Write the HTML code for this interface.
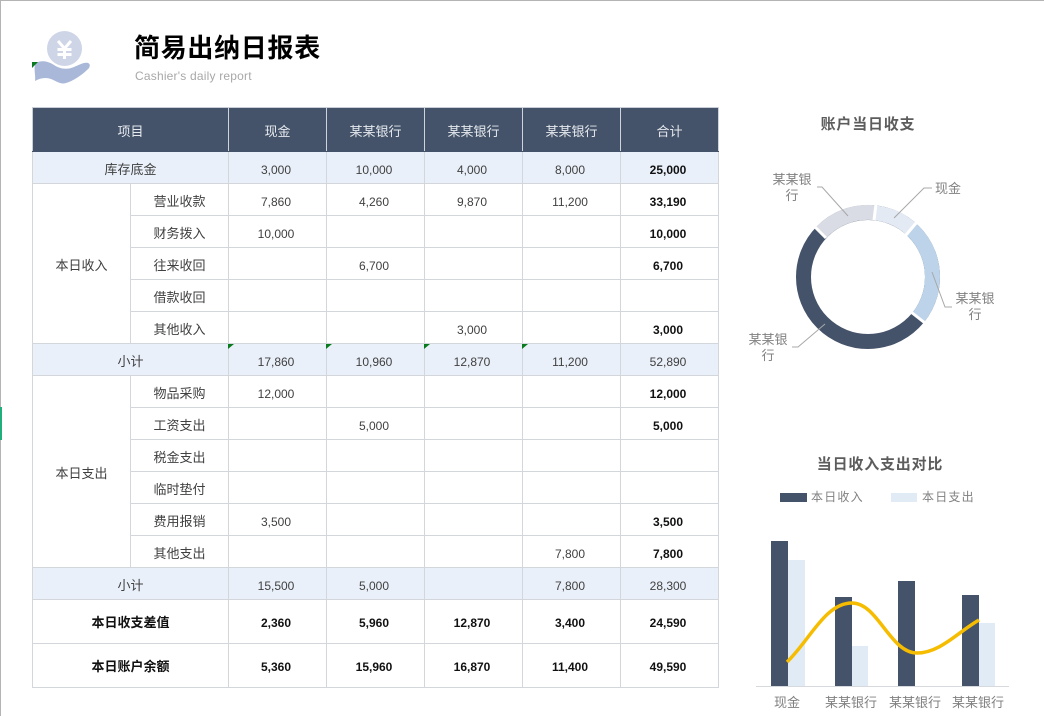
<!DOCTYPE html>
<html><head><meta charset="utf-8">
<style>
html,body{margin:0;padding:0;background:#fff}
body{width:1044px;height:716px;position:relative;overflow:hidden;font-family:"Liberation Sans","Noto Sans CJK SC",sans-serif;color:#404040}
.abs{position:absolute}
table{position:absolute;left:32px;top:107px;border-collapse:collapse;table-layout:fixed;width:686px}
td{border:1px solid #d3d6db;padding:5px 3px 0 0;margin:0;text-align:center;font-size:12px;box-sizing:border-box;height:32px;line-height:14px;overflow:hidden}
td.c{font-size:13px;padding-right:0}
tr.h td{background:#445369;color:#e6e9ee;height:44px;border-color:#445369;border-right-color:#cfd4dc;font-size:13px;padding-right:0}
tr.h td:first-child{border-left-color:#c9ced6}
tr.h td{border-top-color:#c9ced6}
tr.s td{background:#e9f0f9}
td.b{font-weight:bold;color:#111}
tr.t td{height:44px;font-weight:bold;color:#111;padding-top:3px}
tr.t td.c{font-size:13px}
.tri{position:absolute;width:0;height:0;border-top:5px solid #0a7a1e;border-right:6px solid transparent}
</style></head><body>
<div class="abs" style="left:0;top:0;width:1044px;height:1px;background:#b4b4b4"></div>
<div class="abs" style="left:0;top:0;width:1px;height:716px;background:#b4b4b4"></div>
<div class="abs" style="left:0;top:407px;width:2px;height:33px;background:#1fae7c"></div>

<svg class="abs" style="left:30px;top:30px" width="64" height="56" viewBox="30 30 64 56">
<circle cx="64.5" cy="48.5" r="17.500" fill="#ced5e7"/>
<path d="M58 41L64.500 48.500L71 41M64.500 48.500V59M57.500 49.500H71.500M57.500 54.500H71.500" fill="none" stroke="#fff" stroke-width="3"/>
<path d="M35 81C36 76 33 67 36 63C41 60 48 61 54 65C60 69 67 70 74 67C79 65 84 62 88 63C91 64 90 68 87 70C82 75 73 81 66 83C61 85 56 81 51 79C46 77 40 78 35 81Z" fill="#a9b8d9"/>
<path d="M32 62H38L32 68Z" fill="#0a7a1e"/>
</svg>

<div class="abs" style="left:134px;top:30px;font-size:26px;font-weight:bold;letter-spacing:.7px;line-height:36px;color:#000;white-space:nowrap">简易出纳日报表</div>
<div class="abs" style="left:135px;top:69px;font-size:12px;letter-spacing:.2px;line-height:15px;color:#a8a8a8;white-space:nowrap">Cashier's daily report</div>

<table>
<colgroup><col style="width:98px"><col style="width:98px"><col style="width:98px"><col style="width:98px"><col style="width:98px"><col style="width:98px"><col style="width:98px"></colgroup>
<tr class="h"><td colspan="2">项目</td><td>现金</td><td>某某银行</td><td>某某银行</td><td>某某银行</td><td>合计</td></tr>
<tr class="s"><td colspan="2" class="c">库存底金</td><td>3,000</td><td>10,000</td><td>4,000</td><td>8,000</td><td class="b">25,000</td></tr>
<tr><td rowspan="5" class="c">本日收入</td><td class="c">营业收款</td><td>7,860</td><td>4,260</td><td>9,870</td><td>11,200</td><td class="b">33,190</td></tr>
<tr><td class="c">财务拨入</td><td>10,000</td><td></td><td></td><td></td><td class="b">10,000</td></tr>
<tr><td class="c">往来收回</td><td></td><td>6,700</td><td></td><td></td><td class="b">6,700</td></tr>
<tr><td class="c">借款收回</td><td></td><td></td><td></td><td></td><td></td></tr>
<tr><td class="c">其他收入</td><td></td><td></td><td>3,000</td><td></td><td class="b">3,000</td></tr>
<tr class="s"><td colspan="2" class="c">小计</td><td>17,860</td><td>10,960</td><td>12,870</td><td>11,200</td><td>52,890</td></tr>
<tr><td rowspan="6" class="c">本日支出</td><td class="c">物品采购</td><td>12,000</td><td></td><td></td><td></td><td class="b">12,000</td></tr>
<tr><td class="c">工资支出</td><td></td><td>5,000</td><td></td><td></td><td class="b">5,000</td></tr>
<tr><td class="c">税金支出</td><td></td><td></td><td></td><td></td><td></td></tr>
<tr><td class="c">临时垫付</td><td></td><td></td><td></td><td></td><td></td></tr>
<tr><td class="c">费用报销</td><td>3,500</td><td></td><td></td><td></td><td class="b">3,500</td></tr>
<tr><td class="c">其他支出</td><td></td><td></td><td></td><td>7,800</td><td class="b">7,800</td></tr>
<tr class="s"><td colspan="2" class="c">小计</td><td>15,500</td><td>5,000</td><td></td><td>7,800</td><td>28,300</td></tr>
<tr class="t"><td colspan="2" class="c">本日收支差值</td><td>2,360</td><td>5,960</td><td>12,870</td><td>3,400</td><td>24,590</td></tr>
<tr class="t"><td colspan="2" class="c">本日账户余额</td><td>5,360</td><td>15,960</td><td>16,870</td><td>11,400</td><td>49,590</td></tr>
</table>
<div class="tri" style="left:228px;top:344px"></div>
<div class="tri" style="left:326px;top:344px"></div>
<div class="tri" style="left:424px;top:344px"></div>
<div class="tri" style="left:522px;top:344px"></div>

<svg class="abs" style="left:0;top:0" width="1044" height="716" viewBox="0 0 1044 716" font-family="'Liberation Sans','Noto Sans CJK SC',sans-serif">
<g text-anchor="middle">
<text x="868" y="129" font-size="15" font-weight="bold" fill="#5c5c5c" letter-spacing=".8">账户当日收支</text>
<text x="880" y="469" font-size="15" font-weight="bold" fill="#5c5c5c" letter-spacing=".8">当日收入支出对比</text>
</g>
<g fill="none" stroke-width="15">
<circle cx="868" cy="277" r="64.5" stroke="#445369"/>
<path d="M874.700 212.800A64.500 64.500 0 0 1 911.200 229.100" stroke="#e3eaf4"/>
<path d="M911.200 229.100A64.500 64.500 0 0 1 918.100 317.600" stroke="#bcd3ea"/>
<path d="M820.800 232.900A64.500 64.500 0 0 1 874.700 212.800" stroke="#d9dce5"/>
</g>
<g stroke="#fff" stroke-width="3" fill="none">
<path d="M874 220L876 204"/><path d="M906 235L917 222"/><path d="M911 312L925 323"/><path d="M826 238L815 227"/>
</g>
<g fill="none" stroke="#a8a8a8" stroke-width="1">
<path d="M817 187H822L848 216"/>
<path d="M932 188H924L894 218"/>
<path d="M952 307H945L932 272"/>
<path d="M792 347H798L825 324"/>
</g>
<g font-size="13" fill="#808080" text-anchor="middle">
<text x="792" y="184">某某银</text><text x="792" y="200">行</text>
<text x="948" y="193">现金</text>
<text x="975" y="303">某某银</text><text x="975" y="319">行</text>
<text x="768" y="344">某某银</text><text x="768" y="360">行</text>
</g>
<rect x="780" y="493" width="27" height="9" fill="#445369"/>
<rect x="891" y="493" width="26" height="9" fill="#e1ebf6"/>
<g font-size="12" fill="#808080" letter-spacing="1.200">
<text x="811" y="501">本日收入</text>
<text x="922" y="501">本日支出</text>
</g>
<rect x="771" y="541" width="17" height="145" fill="#445369"/>
<rect x="788" y="560" width="17" height="126" fill="#e1ebf6"/>
<rect x="835" y="597" width="17" height="89" fill="#445369"/>
<rect x="852" y="646" width="16" height="40" fill="#e1ebf6"/>
<rect x="898" y="581" width="17" height="105" fill="#445369"/>
<rect x="962" y="595" width="17" height="91" fill="#445369"/>
<rect x="979" y="623" width="16" height="63" fill="#e1ebf6"/>
<path d="M756 686.500H1009" stroke="#d6d9de" stroke-width="1" fill="none"/>
<path d="M787 662C810 640 825 603 852 603C878 603 890 653 917 653C940 653 958 632 979 620" fill="none" stroke="#f5bc00" stroke-width="3.500"/>
<g font-size="13" fill="#808080" text-anchor="middle">
<text x="787" y="707">现金</text>
<text x="851" y="707">某某银行</text>
<text x="915" y="707">某某银行</text>
<text x="978" y="707">某某银行</text>
</g>
</svg>
</body></html>
